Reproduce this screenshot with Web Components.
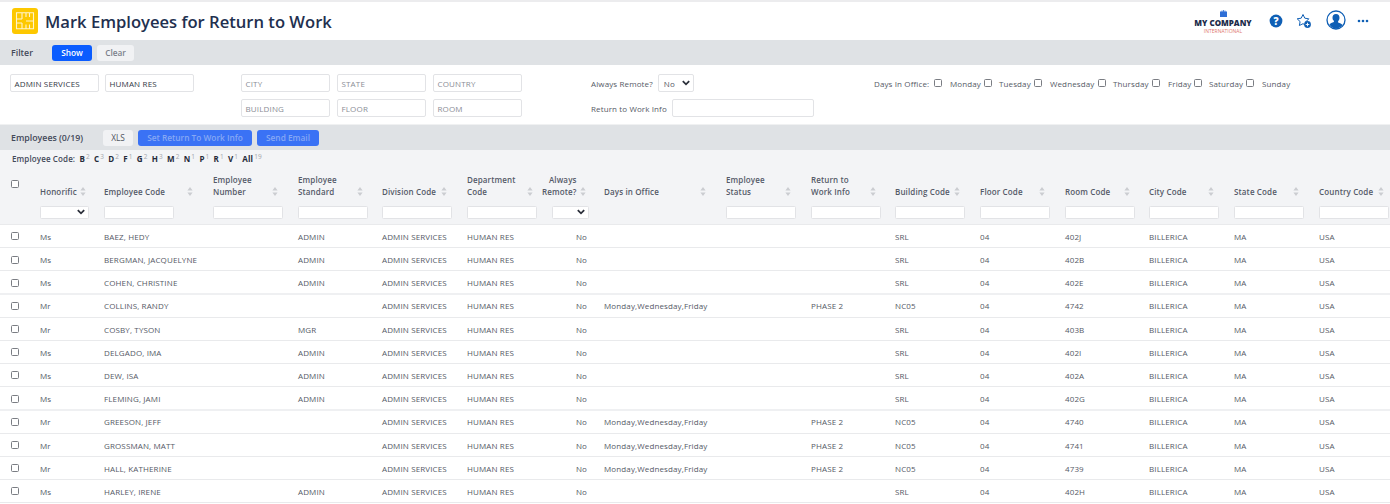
<!DOCTYPE html>
<html lang="en">
<head>
<meta charset="UTF-8">
<title>Mark Employees for Return to Work</title>
<style>
  html, body { margin: 0; padding: 0; background: #fff; overflow: hidden; }
  body { font-family: "Open Sans", sans-serif; color: #4a4f5c; height: 504px; }
</style>
</head>
<body>
<page-header></page-header>
<filter-bar></filter-bar>
<filter-form></filter-form>
<employees-bar></employees-bar>
<letter-row></letter-row>
<data-table></data-table>

<script>
const chevron = `<svg width="8" height="6" viewBox="0 0 8 6"><path d="M.8 1.200 4 4.300 7.200 1.200" fill="none" stroke="#2b2f3a" stroke-width="1.800"/></svg>`

class PageHeader extends HTMLElement {
  connectedCallback() {
    this.attachShadow({mode: 'open'}).innerHTML = `
    <style>
      :host { display: flex; align-items: center; height: 38px; border-top: 2px solid #ececee; padding-left: 12px; }
      .logo { width: 26px; height: 26px; flex: none; margin-bottom: 1px; }
      h1 { margin: 0 0 0 7px; font: 600 16.600px "Open Sans", sans-serif; color: #22304f; flex: 1; white-space: nowrap; }
      .co { width: 60px; margin-right: 15px; text-align: center; display: flex; flex-direction: column; align-items: center; line-height: 1; margin-top: 1px; }
      .co b { font: 800 8px "Open Sans", sans-serif; color: #1c2b4a; white-space: nowrap; }
      .co span { font: 400 5px "Open Sans", sans-serif; color: #e0796f; white-space: nowrap; margin-top: 0; }
      .icons { display: flex; align-items: center; }
    </style>
    <svg class="logo" viewBox="0 0 26 26">
      <rect width="26" height="26" rx="3" fill="#fdc800"/>
      <path d="M4.500 4.800h17v16h-17zM4.500 11h5.500M10 4.800v6.200M14 4.800v4.200M17.500 4.800v4.200M4.500 15h5.500M10 15v5.800M14 16.500v4.300M17.500 16.500v4.300M14 13h7.500" fill="none" stroke="#fff" stroke-width="1.100" opacity=".8"/>
    </svg>
    <h1>Mark Employees for Return to Work</h1>
    <div class="co">
      <svg width="7" height="7" viewBox="0 0 7 7"><path d="M0 1.500h1.600V.6h.8v.9h.7V0h.8v1.500h.7V.6h.8v.9H7V7H0z" fill="#2f6fd6"/></svg>
      <b>MY COMPANY</b><span>INTERNATIONAL</span>
    </div>
    <div class="icons">
      <svg width="14" height="14" viewBox="0 0 14 14" style="margin-left:1px"><circle cx="7" cy="7" r="6.400" fill="#0f5fb5"/><text x="7" y="10.600" text-anchor="middle" font-family="Open Sans" font-weight="800" font-size="10" fill="#fff">?</text></svg>
      <svg width="16" height="16" viewBox="0 0 16 16" style="margin-left:13px"><path d="M7 1.500 8.800 5.200 12.800 5.800 10 8.600 10.500 12.500 7 10.700 3.400 12.500 4.100 8.600 1.200 5.800 5.200 5.200z" fill="#fff" stroke="#0f5fb5" stroke-width="1" stroke-linejoin="round"/><circle cx="11.500" cy="11.500" r="3.400" fill="#0f5fb5"/><path d="M9.700 11.500h3.600M11.500 9.700v3.600" stroke="#fff" stroke-width=".9"/></svg>
      <svg width="20" height="20" viewBox="0 0 20 20" style="margin:0 0 2px 14px"><circle cx="10" cy="10" r="9" fill="#fff" stroke="#0f5fb5" stroke-width="1.300"/><path d="M10 4c2.300 0 3.500 1.700 3.500 3.800 0 1.500-.6 2.700-1.400 3.500v1.200c1.700.7 3.700 1.400 4.500 2.600A8.500 8.500 0 0 1 10 18.700a8.500 8.500 0 0 1-6.600-4.100c.8-1.200 2.800-1.900 4.500-2.600v-1.200C7.100 10.500 6.500 9.300 6.500 7.800 6.500 5.700 7.700 4 10 4z" fill="#0f5fb5"/></svg>
      <svg width="12" height="4" viewBox="0 0 12 4" style="margin:0 21px 0 11px"><circle cx="2" cy="2" r="1.300" fill="#0f5fb5"/><circle cx="6" cy="2" r="1.300" fill="#0f5fb5"/><circle cx="10" cy="2" r="1.300" fill="#0f5fb5"/></svg>
    </div>`
  }
}
customElements.define('page-header', PageHeader)

class ActionButton extends HTMLElement {
  connectedCallback() {
    this.attachShadow({mode: 'open'}).innerHTML = `
    <style>
      :host { display: inline-flex; align-items: center; justify-content: center; height: 16px; border-radius: 3px; font: 600 8.300px "Open Sans", sans-serif; white-space: nowrap; box-sizing: border-box; }
      :host([kind=primary]) { background: #0a5cff; color: #fff; }
      :host([kind=muted]) { background: #3a72f5; color: #86a8f4; }
      :host([kind=plain]) { background: #f1f2f4; color: #7b7f8a; }
    </style><slot></slot>`
  }
}
customElements.define('action-button', ActionButton)

class FilterBar extends HTMLElement {
  connectedCallback() {
    this.attachShadow({mode: 'open'}).innerHTML = `
    <style>
      :host { display: flex; align-items: center; height: 25px; background: #dfe2e5; padding-left: 11px; font: 600 8.800px "Open Sans", sans-serif; color: #434959; }
      span { width: 41px; }
      action-button + action-button { margin-left: 5px; }
    </style>
    <span>Filter</span>
    <action-button kind="primary" style="width:40px">Show</action-button>
    <action-button kind="plain" style="width:37px">Clear</action-button>`
  }
}
customElements.define('filter-bar', FilterBar)

class TextBox extends HTMLElement {
  connectedCallback() {
    const ph = this.getAttribute('placeholder')
    this.attachShadow({mode: 'open'}).innerHTML = `
    <style>
      :host { display: flex; align-items: center; height: 18px; box-sizing: border-box; border: 1px solid #e2e3e6; border-radius: 2px; padding-left: 3.500px; background: #fff; font: 400 8px "Open Sans", sans-serif; letter-spacing: .16px; white-space: nowrap; color: #333845; }
      :host([placeholder]) { color: #8a8d96; }
    </style>${ph || ''}<slot></slot>`
  }
}
customElements.define('text-box', TextBox)

class CheckMark extends HTMLElement {
  connectedCallback() {
    this.attachShadow({mode: 'open'}).innerHTML = `
    <style>
      :host { display: inline-block; width: 8px; height: 8px; box-sizing: border-box; border: 1px solid #7a7d83; border-radius: 1.500px; background: #fff; flex: none; }
    </style>`
  }
}
customElements.define('check-mark', CheckMark)

class FilterForm extends HTMLElement {
  connectedCallback() {
    const days = ['Monday', 'Tuesday', 'Wednesday', 'Thursday', 'Friday', 'Saturday', 'Sunday']
    const dayW = [34, 35, 48, 39, 26, 37, 30]
    this.attachShadow({mode: 'open'}).innerHTML = `
    <style>
      :host { display: grid; height: 60px; box-sizing: border-box; border-bottom: 1px solid #f0f1f2;
        grid-template-columns: 10px 89px 6px 89px 47px 89px 7px 89px 7px 89px 69px 1fr;
        grid-template-rows: 18px 18px; row-gap: 7px; padding-top: 9px;
        font: 400 8px "Open Sans", sans-serif; color: #565a66; letter-spacing: .12px; }
      .r { display: flex; align-items: center; white-space: nowrap; }
      .sel { display: flex; align-items: center; justify-content: space-between; flex: none; width: 36px; height: 18px; box-sizing: border-box; border: 1px solid #e2e3e6; border-radius: 2px; padding: 0 3px 0 5px; margin-left: 5px; color: #565a66; }
      .days { grid-column: 12; grid-row: 1; margin-left: 283px; display: flex; align-items: center; white-space: nowrap; }
      .days span { flex: none; }
      .box { width: 142px; height: 18px; flex: none; box-sizing: border-box; border: 1px solid #e2e3e6; border-radius: 2px; margin-left: 5px; }
    </style>
    <text-box style="grid-column:2;grid-row:1">ADMIN SERVICES</text-box>
    <text-box style="grid-column:4;grid-row:1">HUMAN RES</text-box>
    <text-box style="grid-column:6;grid-row:1" placeholder="CITY"></text-box>
    <text-box style="grid-column:8;grid-row:1" placeholder="STATE"></text-box>
    <text-box style="grid-column:10;grid-row:1" placeholder="COUNTRY"></text-box>
    <text-box style="grid-column:6;grid-row:2" placeholder="BUILDING"></text-box>
    <text-box style="grid-column:8;grid-row:2" placeholder="FLOOR"></text-box>
    <text-box style="grid-column:10;grid-row:2" placeholder="ROOM"></text-box>
    <div class="r" style="grid-column:12;grid-row:1;width:110px">Always Remote?<span class="sel">No ${chevron}</span></div>
    <div class="r" style="grid-column:12;grid-row:2">Return to Work Info<span class="box"></span></div>
    <div class="days"><span style="width:60px">Days In Office:</span><check-mark></check-mark>${days.map((d, i) => `<span style="margin-left:${i % 2 ? 7 : 8}px;width:${dayW[i]}px">${d}</span>${i < 6 ? '<check-mark></check-mark>' : ''}`).join('')}</div>`
  }
}
customElements.define('filter-form', FilterForm)

class EmployeesBar extends HTMLElement {
  connectedCallback() {
    this.attachShadow({mode: 'open'}).innerHTML = `
    <style>
      :host { display: flex; align-items: center; height: 25px; background: #dfe2e5; padding-left: 11px; font: 600 8.800px "Open Sans", sans-serif; color: #434959; }
      span { width: 92px; white-space: nowrap; }
      action-button + action-button { margin-left: 5px; }
    </style>
    <span>Employees (0/19)</span>
    <action-button kind="plain" style="width:30px;color:#50545f;font-weight:400">XLS</action-button>
    <action-button kind="muted" style="width:114px">Set Return To Work Info</action-button>
    <action-button kind="muted" style="width:62px">Send Email</action-button>`
  }
}
customElements.define('employees-bar', EmployeesBar)

class LetterRow extends HTMLElement {
  connectedCallback() {
    const letters = [['B',2],['C',3],['D',2],['F',1],['G',2],['H',3],['M',2],['N',1],['P',1],['R',1],['V',1],['All',19]]
    this.attachShadow({mode: 'open'}).innerHTML = `
    <style>
      :host { display: flex; align-items: center; height: 17px; padding-left: 12px; background: #f3f4f6; font: 600 8px "Open Sans", sans-serif; letter-spacing: .12px; color: #434959; white-space: nowrap; }
      b { font-weight: 700; color: #262b3a; margin-left: 4.200px; }
      sup { font: 400 6.500px "Open Sans", sans-serif; color: #a4a7ad; position: relative; top: -1.500px; margin-left: 1px; line-height: 1; vertical-align: baseline; }
    </style>
    Employee Code:${letters.map(([l, n]) => `<b>${l}</b><sup>${n}</sup>`).join('')}`
  }
}
customElements.define('letter-row', LetterRow)

class SortArrows extends HTMLElement {
  connectedCallback() {
    this.attachShadow({mode: 'open'}).innerHTML = `
    <style>:host { display: inline-flex; flex: none; }</style>
    <svg width="6" height="9" viewBox="0 0 6 9"><path d="M3 0 5.600 3.400H.4zM3 9 .4 5.600h5.200z" fill="#cbcdd1"/></svg>`
  }
}
customElements.define('sort-arrows', SortArrows)

const COLS = '40px 64px 109px 85px 84px 85px 73px 64px 122px 85px 84px 85px 85px 84px 85px 85px 71px'
const HEAD = [
  ['Honorific', 46, 'sel'],
  ['Employee Code', 89],
  ['Employee<br>Number', 65],
  ['Employee<br>Standard', 65],
  ['Division Code', 65],
  ['Department<br>Code', 66],
  ['Always<br>Remote?', 43, 'sel2'],
  ['Days in Office', 102],
  ['Employee<br>Status', 65],
  ['Return to<br>Work Info', 65],
  ['Building Code', 65],
  ['Floor Code', 65],
  ['Room Code', 65],
  ['City Code', 65],
  ['State Code', 65],
  ['Country Code', 65],
]
const row = (hon, name, std, days, work, bld, room) => [hon, name, '', std, 'ADMIN SERVICES', 'HUMAN RES', 'No', days, '', work, bld, '04', room, 'BILLERICA', 'MA', 'USA']
const MWF = 'Monday,Wednesday,Friday'
const ROWS = [
  row('Ms','BAEZ, HEDY','ADMIN','','','SRL','402J'),
  row('Ms','BERGMAN, JACQUELYNE','ADMIN','','','SRL','402B'),
  row('Ms','COHEN, CHRISTINE','ADMIN','','','SRL','402E'),
  row('Mr','COLLINS, RANDY','',MWF,'PHASE 2','NC05','4742'),
  row('Mr','COSBY, TYSON','MGR','','','SRL','403B'),
  row('Ms','DELGADO, IMA','ADMIN','','','SRL','402I'),
  row('Ms','DEW, ISA','ADMIN','','','SRL','402A'),
  row('Ms','FLEMING, JAMI','ADMIN','','','SRL','402G'),
  row('Mr','GREESON, JEFF','',MWF,'PHASE 2','NC05','4740'),
  row('Mr','GROSSMAN, MATT','',MWF,'PHASE 2','NC05','4741'),
  row('Mr','HALL, KATHERINE','',MWF,'PHASE 2','NC05','4739'),
  row('Ms','HARLEY, IRENE','ADMIN','','','SRL','402H'),
]

class DataTable extends HTMLElement {
  connectedCallback() {
    const head = HEAD.map(([t, w, k]) => {
      const cls = k === 'sel2' ? 'h remote' : 'h'
      return `<div class="${cls}"><span class="t">${t}</span><sort-arrows></sort-arrows></div>`
    }).join('')
    const filters = HEAD.map(([t, w, k]) => {
      if (k === 'sel') return `<div class="f"><span class="s" style="width:49px">${chevron}</span></div>`
      if (k === 'sel2') return `<div class="f"><span class="s" style="width:37px;margin-left:12px">${chevron}</span></div>`
      if (t === 'Days in Office') return `<div class="f"></div>`
      return `<div class="f"><span class="i"></span></div>`
    }).join('')
    const widths = HEAD.map(([t, w], i) => w ? `.head > .h:nth-child(${i + 2}){width:${w}px}` : '').join('')
    // rows 3 and 8 end on a heavier rule in the reference
    const rows = ROWS.map((r, n) => `<div class="row${n === 2 || n === 7 ? ' thick' : ''}"><div class="ck"><check-mark></check-mark></div>${r.map((v, i) => `<div class="c${i === 6 ? ' no' : ''}">${v}</div>`).join('')}</div>`).join('')
    this.attachShadow({mode: 'open'}).innerHTML = `
    <style>
      :host { display: block; font: 400 8px "Open Sans", sans-serif; color: #555966; letter-spacing: .13px; width: 1390px; overflow: hidden; }
      .head, .filters, .row { display: grid; grid-template-columns: ${COLS}; }
      .head { background: #f3f4f6; height: 32px; align-items: end; color: #555a68; font-weight: 600; }
      .ck0 { align-self: start; padding: 12px 0 0 11px; }
      .h { display: flex; align-items: flex-end; justify-content: space-between; line-height: 11.500px; padding-bottom: 2px; box-sizing: border-box; white-space: nowrap; }
      .h sort-arrows { margin-bottom: 1px; }
      .remote { justify-content: flex-start; gap: 3px; padding-left: 2px; width: auto !important; }
      .remote .t { text-align: right; }
      ${widths}
      .filters { background: #f3f4f6; height: 25px; border-bottom: 1px solid #e9eaec; }
      .f { display: flex; align-items: flex-start; padding-top: 7px; }
      .i, .s { display: flex; height: 13px; box-sizing: border-box; border: 1px solid #e2e3e6; border-radius: 1.500px; background: #fff; }
      .i { width: 70px; }
      .s { align-items: center; justify-content: flex-end; padding-right: 3px; margin-top: -.5px; }
      .row { height: 23.200px; box-sizing: border-box; padding-top: .5px; border-bottom: 1px solid #e9eaec; background: #fff; align-items: center; white-space: nowrap; }
      .row.thick { border-bottom: 2px solid #eff0f2; padding-top: 1.500px; }
      .ck { padding-left: 11px; display: flex; }
      .no { text-align: right; padding-right: 17px; }
    </style>
    <div class="head"><div class="ck0"><check-mark></check-mark></div>${head}</div>
    <div class="filters"><div></div>${filters}</div>
    ${rows}`
  }
}
customElements.define('data-table', DataTable)
</script>
</body>
</html>
